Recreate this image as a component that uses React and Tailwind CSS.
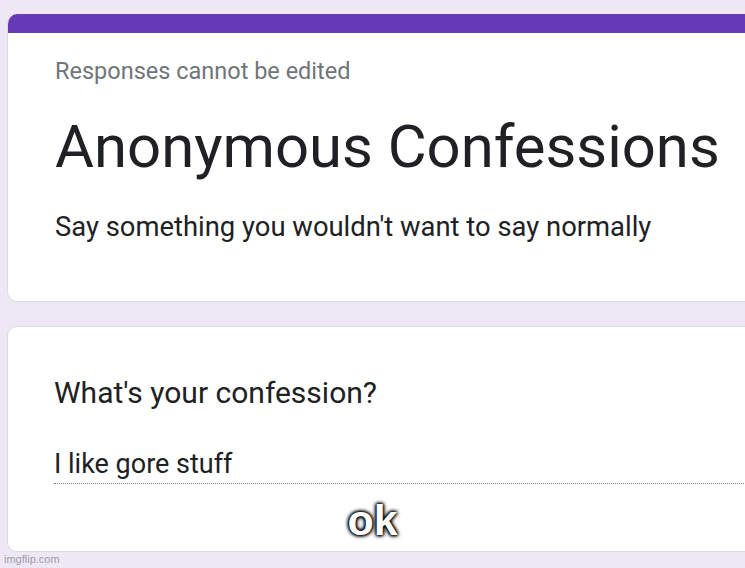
import React from 'react';

const roboto = { fontFamily: 'Roboto, "Noto Sans", sans-serif' };

function Card({ children, top = false, className = '' }) {
  return (
    <div
      className={`w-[780px] bg-white border border-[#dadce0] rounded-[10px] overflow-hidden ${className}`}
    >
      {top && <div className="h-[19px] bg-[#673ab7]" />}
      {children}
    </div>
  );
}

export default function App() {
  return (
    <div
      className="relative w-[745px] h-[568px] overflow-hidden bg-[#ede7f6] pl-[7px] pt-[14px] flex flex-col gap-[24px]"
      style={roboto}
    >
      {/* Header card */}
      <Card top className="h-[288px] border-t-0">
        <div className="pl-[47px] pt-[26px]">
          <p className="text-[23.5px] leading-[24px] text-[#70757a]">Responses cannot be edited</p>
          <h1 className="mt-[29px] text-[59.8px] leading-[70px] text-[#202124]">Anonymous Confessions</h1>
          <p className="mt-[29px] text-[27.4px] leading-[32px] text-[#202124]">
            Say something you wouldn't want to say normally
          </p>
        </div>
      </Card>

      {/* Question card */}
      <Card className="h-[226px]">
        <div className="pl-[46px] pt-[49px]">
          <p className="text-[30px] leading-[34px] text-[#202124]">What's your confession?</p>
          <div className="mt-[38px] w-[740px] border-b border-dotted border-[#80868b] pb-[3px]">
            <p className="text-[27px] leading-[32px] text-[#202124]">I like gore stuff</p>
          </div>
        </div>
      </Card>

      {/* meme caption */}
      <div
        className="absolute left-0 right-0 top-[494px] text-center text-[43px] leading-[52px] font-bold text-white"
        style={{
          fontFamily: '"Liberation Sans", Arial, sans-serif',
          textShadow: '0 0 3px #000, 0 0 3px #000, 0 0 4px #000, 0 0 5px #000',
        }}
      >
        ok
      </div>

      {/* watermark */}
      <div
        className="absolute left-[4px] bottom-[3px] text-[11px] leading-[12px] text-[#9e9ea6]"
        style={{ fontFamily: '"Liberation Sans", Arial, sans-serif' }}
      >
        imgflip.com
      </div>
    </div>
  );
}
